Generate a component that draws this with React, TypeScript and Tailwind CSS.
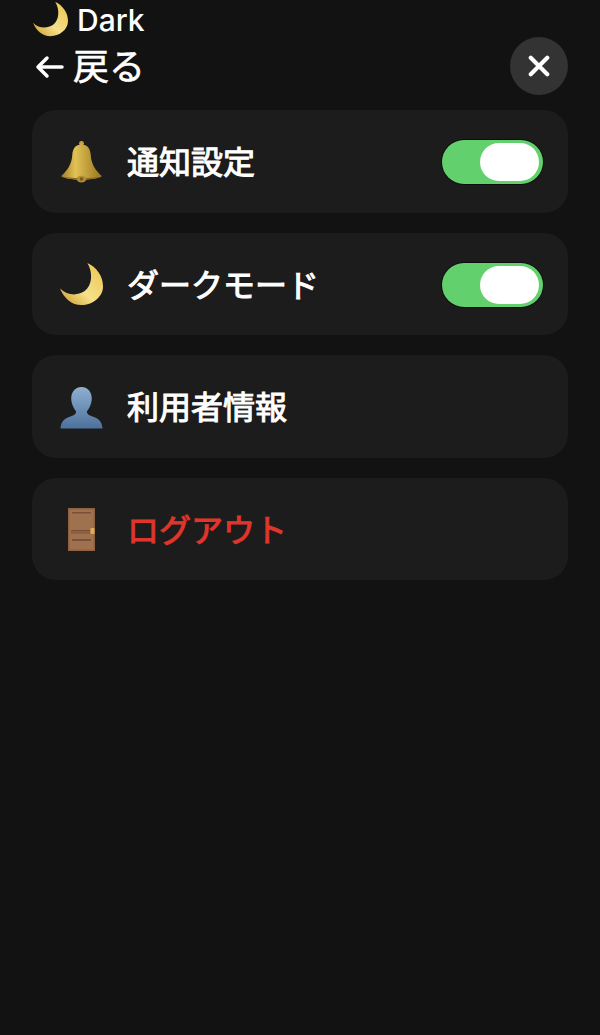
import React from 'react';

const FONT = "font-['Inter','Noto_Sans_CJK_JP',sans-serif]";

function Moon({ className, id }: { className: string; id: string }) {
  return (
    <svg viewBox="0 0 44 44" className={className}>
      <defs>
        <linearGradient id={id} x1="0.9" y1="0.2" x2="0.2" y2="0.9">
          <stop offset="0" stopColor="#eecb5e" />
          <stop offset="0.6" stopColor="#f6e08a" />
          <stop offset="1" stopColor="#d9b048" />
        </linearGradient>
      </defs>
      <path d="M28 0C37 4 44 13 44 24C44 35 33 43 22 43C12 43 4 36 0 26C7 33 17 34 25 29C33 23 34 10 28 0Z" fill={`url(#${id})`} />
    </svg>
  );
}

function Bell() {
  return (
    <svg viewBox="0 0 44 44" className="h-[44px] w-[44px]">
      <defs>
        <linearGradient id="bellFill" x1="0" y1="0" x2="1" y2="0">
          <stop offset="0" stopColor="#a07c26" />
          <stop offset="0.35" stopColor="#e2c255" />
          <stop offset="1" stopColor="#97721e" />
        </linearGradient>
      </defs>
      <circle cx="22" cy="3" r="2.500" fill="#c9a53f" />
      <path d="M22 4C16 4 13 8 12.500 15C12 24 8 30 1 36.500C6 39 14 40 22 40C30 40 38 39 43 36.500C36 30 32 24 31.500 15C31 8 28 4 22 4Z" fill="url(#bellFill)" />
      <path d="M1 36.500C7 39 37 39 43 36.500C38 41 6 41 1 36.500Z" fill="#8a6a20" />
      <ellipse cx="22" cy="39.500" rx="5" ry="3.500" fill="#b08d34" />
      <circle cx="22" cy="39.500" r="1.800" fill="#7a5c1a" />
    </svg>
  );
}

function Person() {
  return (
    <svg viewBox="0 0 44 44" className="h-[43px] w-[43px]">
      <defs>
        <linearGradient id="personFill" x1="0" y1="0" x2="0" y2="1">
          <stop offset="0" stopColor="#8fb0d2" />
          <stop offset="1" stopColor="#4d719b" />
        </linearGradient>
      </defs>
      <path d="M22 1C15 1 11 7 11.500 14C12 19 14 23 16.500 26C16.500 29 14 30 10 31.500C5 33 1 36 0.500 43.500H43.500C43 36 39 33 34 31.500C30 30 27.500 29 27.500 26C30 23 32 19 32.500 14C33 7 29 1 22 1Z" fill="url(#personFill)" />
    </svg>
  );
}

function Door() {
  return (
    <svg viewBox="0 0 27 43" className="h-[43px] w-[27px]">
      <rect width="27" height="43" fill="#8f6244" />
      <rect x="1.500" y="1.500" width="24" height="40" fill="#a0714f" />
      <rect x="4" y="4" width="19" height="1.500" fill="#7a5138" />
      <rect x="3" y="22" width="19" height="1.500" fill="#7a5138" />
      <rect x="3" y="24.500" width="19" height="1" fill="#7a5138" />
      <rect x="4" y="31" width="19" height="2" fill="#7a5138" />
      <rect x="22.500" y="20" width="4" height="6" rx="1" fill="#dcae4c" />
    </svg>
  );
}

function Toggle() {
  return (
    <div className="flex h-[44px] w-[101px] items-center justify-end rounded-full bg-[#62d16d] pr-[4px] ring-1 ring-black/50">
      <div className="h-[38px] w-[59px] rounded-full bg-white" />
    </div>
  );
}

function Row({ icon, label, danger, toggle }: { icon: React.ReactNode; label: string; danger?: boolean; toggle?: boolean }) {
  return (
    <div className="flex h-[102.500px] items-center rounded-[24px] bg-[#1c1c1c] pt-[2px] pl-[28px] pr-[25px]">
      <div className="flex w-[43px] justify-center">{icon}</div>
      <span className={`ml-[24px] flex-1 pt-[2px] text-[32px] leading-none font-normal [-webkit-text-stroke:1px_currentColor] ${danger ? 'text-[#e0352b]' : 'text-white'}`}>{label}</span>
      {toggle && <Toggle />}
    </div>
  );
}

export default function App() {
  return (
    <div className={`${FONT} h-[1035px] w-[600px] overflow-hidden bg-[#121212] px-[32px] text-white`}>
      <div className="flex h-[110px] justify-between">
        <div>
          <div className="ml-[1px] flex h-[37px] items-center pt-[2px]">
            <Moon id="moonSmall" className="h-[35px] w-[35px]" />
            <span className="ml-[9px] text-[30px] leading-none font-medium">Dark</span>
          </div>
          <div className="mt-[10px] ml-[2px] flex items-center">
            <svg viewBox="0 0 30 24" className="h-[24px] w-[30px]" fill="none" stroke="white" strokeWidth="3.500" strokeLinecap="round" strokeLinejoin="round">
              <path d="M28 12H4M13 3L4 12L13 21" />
            </svg>
            <span className="ml-[9px] text-[36px] leading-[40px] font-normal [-webkit-text-stroke:0.6px_white]">戻る</span>
          </div>
        </div>
        <div className="mt-[37px] flex h-[58px] w-[58px] items-center justify-center rounded-full bg-[#333333]">
          <svg viewBox="0 0 24 24" className="h-[22px] w-[22px]" fill="none" stroke="white" strokeWidth="4.500" strokeLinecap="round">
            <path d="M3 3L21 21M21 3L3 21" />
          </svg>
        </div>
      </div>
      <div className="flex flex-col gap-[20px]">
        <Row icon={<Bell />} label="通知設定" toggle />
        <Row icon={<Moon id="moonLarge" className="h-[43px] w-[43px]" />} label="ダークモード" toggle />
        <Row icon={<Person />} label="利用者情報" />
        <Row icon={<Door />} label="ログアウト" danger />
      </div>
    </div>
  );
}
